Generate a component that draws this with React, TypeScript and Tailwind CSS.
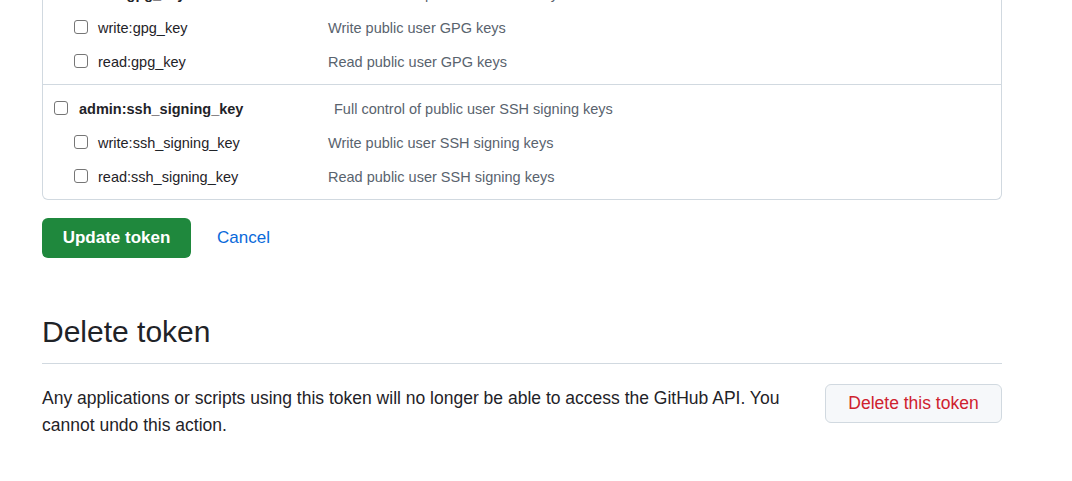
const gpg = {
  admin: { name: "admin:gpg_key", desc: "Full control of public user GPG keys" },
  subs: [
    { name: "write:gpg_key", desc: "Write public user GPG keys" },
    { name: "read:gpg_key", desc: "Read public user GPG keys" },
  ],
};

const ssh = {
  admin: { name: "admin:ssh_signing_key", desc: "Full control of public user SSH signing keys" },
  subs: [
    { name: "write:ssh_signing_key", desc: "Write public user SSH signing keys" },
    { name: "read:ssh_signing_key", desc: "Read public user SSH signing keys" },
  ],
};

function Box() {
  return <span className="mt-[-3px] block w-[14px] h-[14px] shrink-0 rounded-[3px] border border-[#767676] bg-white" />;
}

function ScopeGroup({ group, last }: { group: typeof gpg; last?: boolean }) {
  return (
    <div className={`py-[6px] ${last ? "" : "border-b border-[#d1d9e0]"}`}>
      <div className="flex items-center h-[34px] pt-[3px] pl-[11px]">
        <Box />
        <span className="ml-[11px] w-[255px] font-semibold text-[#1f2328] text-[14.5px]">{group.admin.name}</span>
        <span className="text-[#59636e] text-[14.5px]">{group.admin.desc}</span>
      </div>
      {group.subs.map((s) => (
        <div key={s.name} className="flex items-center h-[34px] pt-[3px] pl-[31px]">
          <Box />
          <span className="ml-[10px] w-[230px] text-[#1f2328] text-[14.5px]">{s.name}</span>
          <span className="text-[#59636e] text-[14.5px]">{s.desc}</span>
        </div>
      ))}
    </div>
  );
}

export default function App() {
  return (
    <div className="min-h-screen bg-white overflow-hidden font-['Segoe_UI','Liberation_Sans',sans-serif] text-[#1f2328]">
      <div className="w-[960px] ml-[42px]">
        <div className="-mt-[30px] rounded-b-[6px] border border-t-0 border-[#d1d9e0]">
          <ScopeGroup group={gpg} />
          <ScopeGroup group={ssh} last />
        </div>

        <div className="flex items-center mt-[18px]">
          <button className="h-[40px] w-[149px] rounded-[6px] bg-[#1f883d] text-white font-semibold text-[17px]">
            Update token
          </button>
          <a className="ml-[26px] text-[#0969da] font-medium text-[17px]">Cancel</a>
        </div>

        <h2 className="mt-[55px] text-[30px] font-normal pb-[12px] border-b border-[#d1d9e0] leading-[1.25]">
          Delete token
        </h2>

        <div className="flex items-start justify-between mt-[20px]">
          <p className="mt-[1px] w-[760px] text-[17.5px] leading-[27px]">
            Any applications or scripts using this token will no longer be able to access the GitHub API. You cannot
            undo this action.
          </p>
          <button className="h-[39px] w-[177px] rounded-[6px] border border-[#d1d9e0] bg-[#f6f8fa] text-[#cf222e] font-medium text-[17.5px]">
            Delete this token
          </button>
        </div>
      </div>
    </div>
  );
}
